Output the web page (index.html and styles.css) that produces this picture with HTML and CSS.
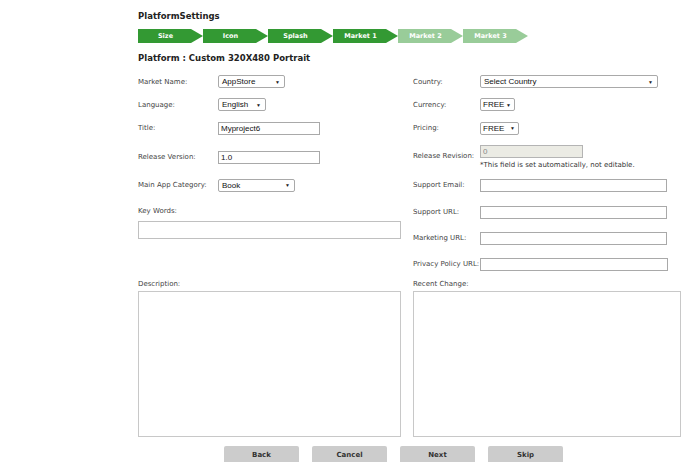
FILE: index.html
```html
<!DOCTYPE html>
<html>
<head>
<meta charset="utf-8">
<link rel="stylesheet" href="styles.css">
</head>
<body>
<div class="page">
  <h1 class="title">PlatformSettings</h1>
  <div class="steps">
    <div class="step done">Size</div>
    <div class="step done">Icon</div>
    <div class="step done">Splash</div>
    <div class="step done">Market 1</div>
    <div class="step todo">Market 2</div>
    <div class="step todo">Market 3</div>
  </div>
  <h2 class="platform">Platform : Custom 320X480 Portrait</h2>

  <div class="cols">
    <div class="col left">
      <div class="row r23"><span class="lbl">Market Name:</span><div class="sel w66"><span>AppStore</span><i>▼</i></div></div>
      <div class="row r23"><span class="lbl">Language:</span><div class="sel w48"><span>English</span><i>▼</i></div></div>
      <div class="row r24"><span class="lbl">Title:</span><input class="txt w102" value="Myproject6"></div>
      <div class="row r34"><span class="lbl">Release Version:</span><input class="txt w102" value="1.0"></div>
      <div class="row r22"><span class="lbl">Main App Category:</span><div class="sel w77"><span>Book</span><i>▼</i></div></div>
      <div class="kw-label">Key Words:</div>
      <input class="txt kw">
    </div>
    <div class="col right">
      <div class="row r23"><span class="lbl rl">Country:</span><div class="sel w177"><span>Select Country</span><i>▼</i></div></div>
      <div class="row r23"><span class="lbl rl">Currency:</span><div class="sel small w34"><span>FREE</span><i>▼</i></div></div>
      <div class="row r24"><span class="lbl rl">Pricing:</span><div class="sel small w38"><span>FREE</span><i>▼</i></div></div>
      <div class="row r34 rev"><span class="lbl rl">Release Revision:</span>
        <div class="revbox"><input class="txt dis" value="0" disabled><div class="note">*This field is set automatically, not editable.</div></div>
      </div>
      <div class="row r22"><span class="lbl rl">Support Email:</span><input class="txt w186"></div>
      <div class="row r26 first"><span class="lbl rl">Support URL:</span><input class="txt w186"></div>
      <div class="row r26"><span class="lbl rl">Marketing URL:</span><input class="txt w186"></div>
      <div class="row r26"><span class="lbl rl">Privacy Policy URL:</span><input class="txt w187"></div>
    </div>
  </div>

  <div class="cols areas">
    <div class="col">
      <div class="alabel">Description:</div>
      <textarea class="area"></textarea>
    </div>
    <div class="col">
      <div class="alabel">Recent Change:</div>
      <textarea class="area"></textarea>
    </div>
  </div>

  <div class="buttons">
    <button class="btn">Back</button>
    <button class="btn">Cancel</button>
    <button class="btn">Next</button>
    <button class="btn">Skip</button>
  </div>
</div>
</body>
</html>
```
FILE: styles.css
```css
html, body {
  margin: 0;
  padding: 0;
  background: #ffffff;
}
body {
  font-family: "DejaVu Sans", Verdana, sans-serif;
  color: #333333;
}
.page {
  margin-left: 138px;
  width: 543px;
  padding-top: 9px;
}
.title {
  margin: 0;
  font-family: "DejaVu Sans", Verdana, sans-serif;
  font-size: 8.5px;
  font-weight: bold;
  color: #222222;
  height: 14px;
  line-height: 14px;
}
.steps {
  display: flex;
  margin-top: 6px;
  height: 14px;
}
.step {
  width: 65px;
  height: 14px;
  flex: none;
  color: #ffffff;
  font-family: "DejaVu Sans", Verdana, sans-serif;
  font-size: 6.5px;
  font-weight: bold;
  line-height: 14px;
  text-align: center;
  padding-right: 10px;
  box-sizing: border-box;
  clip-path: polygon(0 0, 53px 0, 65px 50%, 53px 100%, 0 100%);
}
.step.done { background: #339933; }
.step.todo { background: #99cc99; }
.platform {
  margin: 9px 0 0 0;
  font-family: "DejaVu Sans", Verdana, sans-serif;
  font-size: 8.5px;
  font-weight: bold;
  color: #222222;
  height: 12px;
  line-height: 12px;
}
.cols {
  display: grid;
  grid-template-columns: 263px 268px;
  column-gap: 12px;
  margin-top: 6px;
}
.col {
  display: flex;
  flex-direction: column;
}
.row {
  display: flex;
  align-items: center;
}
.r22 { height: 22px; }
.r23 { height: 23px; }
.r24 { height: 24px; }
.r26 { height: 26px; }
.r34 { height: 34px; }
.row.first { margin-top: 3px; }
.lbl {
  width: 80px;
  flex: none;
  font-size: 7px;
  color: #444444;
  white-space: nowrap;
}
.lbl.rl { width: 67px; }
.sel {
  height: 13px;
  box-sizing: border-box;
  border: 1px solid #a9a9a9;
  border-radius: 2px;
  background: #ffffff;
  display: flex;
  align-items: center;
  justify-content: space-between;
  padding: 0 4px 0 3px;
  font-family: "Liberation Sans", Arial, sans-serif;
  font-size: 8px;
  color: #111111;
}
.sel.small { padding: 0 3px 0 2px; }
.sel i {
  font-style: normal;
  font-size: 5px;
  color: #222222;
}
.w34 { width: 35px; }
.w38 { width: 39px; }
.w48 { width: 48px; }
.w66 { width: 67px; }
.w77 { width: 77px; }
.w177 { width: 178px; }
.txt {
  height: 13px;
  box-sizing: border-box;
  border: 1px solid #a9a9a9;
  padding: 0 2px;
  margin: 0;
  font-family: "Liberation Sans", Arial, sans-serif;
  font-size: 8px;
  color: #111111;
  background: #ffffff;
  outline: none;
}
.w102 { width: 102px; }
.w186 { width: 187px; }
.w187 { width: 188px; }
.rev { align-items: flex-start; padding-top: 5px; box-sizing: border-box; }
.rev .lbl { margin-top: 7px; }
.revbox {
  display: flex;
  flex-direction: column;
}
.txt.dis {
  width: 103px;
  background: #ebebe4;
  border-color: #b4b4b4;
  color: #888888;
}
.note {
  margin-top: 3px;
  font-size: 7px;
  color: #333333;
  white-space: nowrap;
}
.kw-label {
  margin-top: 10px;
  font-size: 7px;
  color: #444444;
  height: 10px;
  line-height: 10px;
}
.kw {
  margin-top: 5px;
  width: 263px;
  height: 18px;
  border-color: #c0c0c0;
}
.areas { margin-top: 2px; }
.alabel {
  font-size: 7px;
  color: #444444;
  height: 10px;
  line-height: 10px;
}
.area {
  margin-top: 2px;
  width: 100%;
  height: 146px;
  box-sizing: border-box;
  border: 1px solid #c8c8c8;
  resize: none;
  padding: 0;
  outline: none;
  background: #ffffff;
}
.buttons {
  display: flex;
  gap: 13px;
  margin-top: 9px;
  margin-left: 86px;
}
.btn {
  width: 75px;
  height: 18px;
  border: none;
  border-radius: 2px 2px 0 0;
  background: #cccccc;
  font-family: "DejaVu Sans", Verdana, sans-serif;
  font-size: 7px;
  font-weight: bold;
  color: #333333;
  padding: 0;
}
```
